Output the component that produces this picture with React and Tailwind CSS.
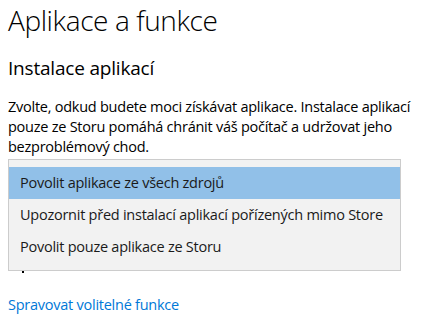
import React from "react";

const options = [
  "Povolit aplikace ze všech zdrojů",
  "Upozornit před instalací aplikací pořízených mimo Store",
  "Povolit pouze aplikace ze Storu",
];

const App = () => {
  const selected = 0;

  return (
    <div className="w-[445px] h-[326px] bg-white overflow-hidden font-['Open_Sans',sans-serif] text-black">
      <div className="px-2">
        <h1 className="pt-[1px] text-[28px] font-light leading-[38px] tracking-[-0.4px]">
          Aplikace a funkce
        </h1>
        <h2 className="mt-[16px] text-[19px] leading-[26px] tracking-[-0.2px]">
          Instalace aplikací
        </h2>
        <p className="mt-[16px] text-[14.5px] leading-[20px] whitespace-nowrap tracking-[-0.25px]">
          Zvolte, odkud budete moci získávat aplikace. Instalace aplikací
          <br />
          pouze ze Storu pomáhá chránit váš počítač a udržovat jeho
          <br />
          bezproblémový chod.
        </p>
        <div className="mt-[2px] w-[393px] border border-[#cccccc] bg-[#f2f2f2] py-[7px]">
          {options.map((label, i) => (
            <div
              key={label}
              className={
                "h-[32px] flex items-center px-[11px] text-[14.5px] whitespace-nowrap tracking-[-0.25px] text-[#1a1a1a] " +
                (i === selected ? "bg-[#91c0e8]" : "")
              }
            >
              {label}
            </div>
          ))}
        </div>
        <div className="ml-[14px] w-[2px] h-[2px] bg-black"></div>
        <a className="block mt-[22px] text-[14.5px] leading-[20px] text-[#0078d7] tracking-[-0.25px]">
          Spravovat volitelné funkce
        </a>
      </div>
    </div>
  );
};

export default App;
